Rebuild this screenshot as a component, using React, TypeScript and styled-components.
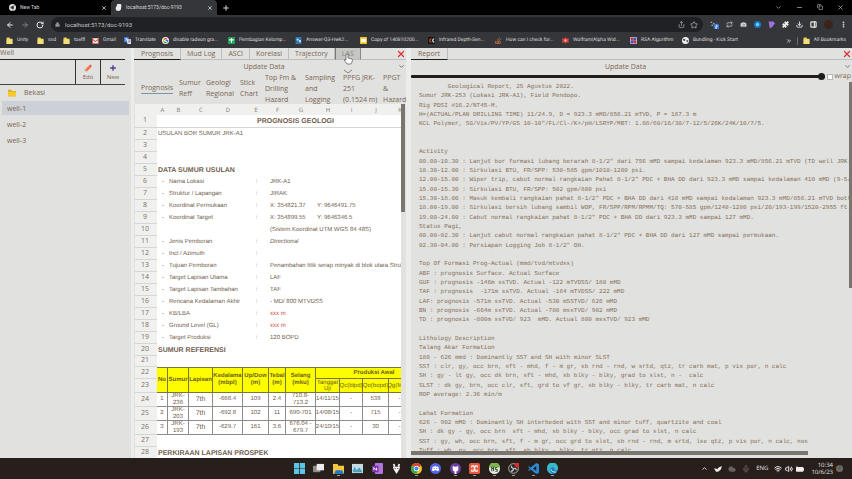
import React from "react";
import styled, { createGlobalStyle, css } from "styled-components";
import {
  ArrowLeft, ArrowRight, RotateCw, Lock, Share, Star, Puzzle, Download, PanelRight, EllipsisVertical,
  ChevronDown, ChevronUp, ChevronsRight, Minus, Copy, X, Plus, Camera, Wifi, Volume2, Cloud, Mic, Repeat,
} from "lucide-react";

const ui = '"Open Sans", "Noto Sans", sans-serif';
const chrome = 'Roboto, "Open Sans", sans-serif';
const sheetFont = '"Liberation Sans", Arial, sans-serif';
const mono = '"Liberation Mono", monospace';

const ink = "#7a6653";
const paper = "#e1e1df";
const gutter = "#ececeb";
const line = "#bdbdbb";

const Global = createGlobalStyle`
  * { box-sizing: border-box; }
  body { margin: 0; background: ${paper}; text-rendering: geometricPrecision; }
  button { background: none; border: 0; padding: 0; margin: 0; color: inherit; font: inherit; }
  svg { display: block; flex: none; }
`;

const Page = styled.div`
  display: flex; flex-direction: column; height: 100vh; overflow: hidden;
  font-family: ${ui}; font-size: 7px; line-height: 11px; color: ${ink};
`;

/* ---------- browser ---------- */
const TitleBar = styled.header`
  display: flex; align-items: center; height: 15px; flex: none; background: #000;
  color: #d8d8d8; font-family: ${chrome}; font-size: 5px;
`;
const BrowserTab = styled.button<{ $active?: boolean }>`
  display: flex; align-items: center; gap: 4px; height: 15px; width: ${p => (p.$active ? 106 : 111)}px;
  padding: 0 4px 0 ${p => (p.$active ? 4 : 9)}px; border-radius: 4px 4px 0 0;
  ${p => p.$active && css`background: #35363a;`}
  span { flex: 1; text-align: left; }
`;
const WindowButtons = styled.div`
  display: flex; gap: 14px; margin-left: auto; padding-right: 8px;
`;
const NewTabButton = styled.button` padding-left: 5px; `;
const AddressRow = styled.div`
  display: flex; align-items: center; height: 18px; flex: none; padding: 1px 5px 0 6px; gap: 7px;
  background: #35363a; color: #e8e8e8;
`;
const AddressBox = styled.div`
  display: flex; align-items: center; gap: 5px; flex: 1; height: 15px; padding: 0 5px 0 4px;
  border-radius: 8px; background: #202124; color: #c8c8c8;
`;
const AddressInput = styled.input`
  flex: 1; min-width: 0; border: 0; outline: 0; padding: 0; background: none;
  color: #c4c6ca; font: 6px ${chrome};
`;
const Bookmarks = styled.nav`
  display: flex; align-items: center; height: 15px; flex: none; padding: 0 6px; background: #35363a;
  font-family: ${chrome}; font-size: 5px;
`;
const Bookmark = styled.a<{ $w?: number }>`
  display: flex; align-items: center; gap: 4px; flex: 0 0 ${p => (p.$w ? p.$w + "px" : "auto")};
  color: #dcdcdc; text-decoration: none; white-space: nowrap;
`;
const BookmarkEnd = styled.div`
  display: flex; align-items: center; gap: 5px; margin-left: auto; color: #dcdcdc;
`;
const Separator = styled.span` width: 1px; height: 8px; background: #6a6a6a; `;

/* ---------- workspace ---------- */
const Workspace = styled.main`
  display: grid; grid-template-columns: 131fr 275fr 446fr;
  flex: 1; min-height: 0;
`;
const Panel = styled.section<{ $gutter?: number }>`
  display: flex; flex-direction: column; min-width: 0; min-height: 0; background: ${paper};
  border-left: ${p => p.$gutter ?? 0}px solid ${gutter};
`;
const SideTitle = styled.h1`
  margin: 0 6px 0 0; height: 12px; font-size: 7px; line-height: 11px; font-weight: 400; border-bottom: 1px solid #222;
`;
const SideActions = styled.div`
  display: flex; justify-content: flex-end; height: 25px; margin-right: 6px; border-bottom: 1px solid #444;
`;
const SideAction = styled.button`
  display: flex; flex-direction: column; align-items: center; justify-content: center; gap: 1px;
  width: 25px; border-left: 1px solid #333; font-size: 6px; line-height: 8px;
`;
const FolderRow = styled.button`
  display: flex; align-items: center; gap: 8px; height: 15px; padding-left: 8px;
`;
const WellList = styled.ul`
  list-style: none; display: flex; flex-direction: column; gap: 2px; margin: 1px 2px 0; padding: 0;
`;
const WellItem = styled.button<{ $selected?: boolean }>`
  width: 100%; height: 14px; padding-left: 5px; text-align: left;
  background: ${p => (p.$selected ? "#cdd0d6" : "transparent")};
`;

const TabStrip = styled.div`
  display: flex; height: 12px; flex: none; border-bottom: 1px solid ${line};
`;
const DocTab = styled.button<{ $active?: boolean; $hover?: boolean }>`
  height: 12px; padding: 0 ${p => (p.$active ? 7 : 6)}px; border-right: 1px solid ${line};
  border-bottom: 1px solid ${p => (p.$active ? "#1c1c1c" : line)};
  ${p => p.$hover && css`background: #c6c6c5; border-left: 1px solid #777; border-right-color: #888; color: #8e8378;`}
`;
const CloseTab = styled.button`
  margin-left: auto; color: #d8343a;
`;
const UpdateBar = styled.button`
  display: grid; grid-template-columns: 8px 1fr 8px; align-items: center; height: 12px; flex: none;
  span { grid-column: 2; padding-right: 12px; text-align: center; }
`;
const SubTabs = styled.div`
  display: flex; align-items: center; height: 32px; flex: none; padding-left: 7px; overflow: hidden;
`;
const SubTab = styled.button<{ $w: number; $active?: boolean }>`
  flex: 0 0 ${p => p.$w}px; text-align: left; white-space: nowrap;
  span { display: inline-block; ${p => p.$active && css`border-bottom: 1px solid #7d93a8;`} }
`;

/* ---------- sheet ---------- */
const SheetArea = styled.div` display: flex; flex: 1; min-height: 0; `;
const SheetClip = styled.div`
  flex: 1; min-width: 0; overflow: hidden; margin-left: 1px; background: #fff;
`;
const ScrollThumb = styled.div`
  width: 4px; height: 108px; margin-right: 1px; background: #7b7570;
`;
const Sheet = styled.table`
  table-layout: fixed; border-collapse: separate; border-spacing: 0; width: 298px;
  font-family: ${sheetFont}; font-size: 6px; line-height: 7px; color: #6f5d4d; font-weight: 400;
`;
const Row = styled.tr<{ $h: number }>` height: ${p => p.$h}px; `;
const ColHead = styled.th`
  padding: 0; background: #f0f0ef; color: #857b70; font: 6px/10px ${ui};
`;
const RowHead = styled.th`
  padding: 0 2px 0 0; background: #f0f0ef; border-bottom: 1px solid #d6d6d4;
  color: #7d7268; font: 7px/10px ${ui};
`;
const Cell = styled.td<{ $bold?: boolean; $center?: boolean; $red?: boolean; $italic?: boolean; $rule?: boolean }>`
  padding: 0 0 0 1px; white-space: nowrap; overflow: visible;
  ${p => p.$bold && css`font-weight: 700; font-size: 7px;`}
  ${p => p.$center && css`text-align: center;`}
  ${p => p.$red && css`color: #d04a3c;`}
  ${p => p.$italic && css`font-style: italic;`}
  ${p => p.$rule && css`border-bottom: 1px solid #d6d6d4;`}
`;
const HeadCell = styled.th<{ $plain?: boolean; $top?: boolean }>`
  padding: 0; overflow: hidden; background: #fdfd00; color: #6e5f1c;
  border-right: 1px solid #77773a; border-bottom: 1px solid #77773a;
  ${p => p.$top && css`border-top: 1px solid #77773a;`}
  font-weight: ${p => (p.$plain ? 400 : 700)}; line-height: ${p => (p.$plain ? 6 : 7)}px;
`;
const DataCell = styled.td`
  padding: 0; overflow: hidden; text-align: center; white-space: nowrap;
  border-right: 1px solid #8c8c8a; border-bottom: 1px solid #8c8c8a;
`;
const CellClip = styled.div<{ $large?: boolean }>`
  display: flex; align-items: center; justify-content: center; max-height: 13px; overflow: hidden;
  ${p => p.$large && css`font-size: 7px;`}
`;

/* ---------- report ---------- */
const WrapBar = styled.div`
  display: flex; align-items: center; height: 9px; flex: none; padding-right: 1px;
`;
const Range = styled.input`
  appearance: none; flex: 1; height: 3px; margin: 0 2px 0 0; background: #1f1c1b; border-radius: 1px;
  &::-webkit-slider-thumb { appearance: none; width: 7px; height: 7px; border-radius: 50%; background: #1f1c1b; }
`;
const WrapLabel = styled.label`
  display: flex; align-items: center; gap: 2px; line-height: 9px;
`;
const Check = styled.input`
  appearance: none; width: 6px; height: 6px; margin: 0; background: #fff; border: 1px solid #b5b5b3;
`;
const ReportArea = styled.div`
  display: flex; flex: 1; min-height: 0; padding-top: 1px;
`;
const ReportText = styled.div`
  display: grid; grid-auto-rows: minmax(9px, 1fr); align-items: center; flex: 1; min-width: 0; overflow: hidden;
  padding-left: 8px; font: 6px/9px ${mono}; white-space: pre; color: #857058;
`;
const SideThumb = styled.div` width: 3px; height: 206px; background: #7b7570; `;
const BottomTrack = styled.div` height: 7px; flex: none; margin-top: -4px; `;
const BottomThumb = styled.div` width: 90%; height: 4px; background: #7b7570; `;

/* ---------- taskbar ---------- */
const Taskbar = styled.footer`
  display: grid; grid-template-columns: 1fr 31% 1fr; align-items: center; height: 21px; flex: none;
  background: #271f1b; color: #e6e4e2; font-family: ${ui};
`;
const Apps = styled.div` display: flex; justify-content: space-between; grid-column: 2; `;
const AppButton = styled.button<{ $running?: boolean }>`
  display: flex; flex-direction: column; align-items: center; gap: 1px; padding-top: 2px;
  &::after { content: ""; width: 3px; height: 1px; background: ${p => (p.$running ? "#a09a96" : "transparent")}; }
`;
const Tray = styled.div`
  display: flex; align-items: center; justify-content: flex-end; gap: 6px; padding-right: 9px;
  font-size: 6px; line-height: 7px;
`;
const TrayGroup = styled.div` display: flex; align-items: center; gap: 3px; padding-right: 1px; `;
const Clock = styled.time` text-align: right; `;
const Bell = styled.span`
  width: 7px; height: 7px; margin-left: -3px; border-radius: 50%; background: #6f6965; color: #2b2421;
  font-size: 5px; line-height: 7px; text-align: center;
`;

const Pointer = styled.svg` position: fixed; left: 343px; top: 53px; `;

/* ---------- drawings ---------- */
type IconName = string;
const art: Record<IconName, React.ReactNode> = {
  folder: <><path d="M1 1h5l1 2h4v9H1z" fill="#e9ce5c" /><path d="M1 4h10v8H1z" fill="#f3e07a" /></>,
  gmail: <><rect y="2" width="12" height="9" rx="1" fill="#f4f0ee" /><path d="M0 2l6 5 6-5v2L6 9 0 4z" fill="#d34a3c" /><path d="M0 3h2v8H0zM10 3h2v8h-2z" fill="#d34a3c" /></>,
  translate: <><rect width="8" height="9" rx="1" fill="#3d7de0" /><path d="M4 4h8v8H6z" fill="#dfe4ea" /><path d="M2 3h4M4 2v1M3 6l2-3" stroke="#fff" fill="none" /><path d="M7 7h4M9 6v1M8 10l2-3" stroke="#657" fill="none" /></>,
  google: <><circle cx="6" cy="6" r="6" fill="#f5f5f5" /><path d="M9 4a4 4 0 0 0-6 0" stroke="#e34133" strokeWidth="2" fill="none" /><path d="M3 4a4 4 0 0 0 0 4" stroke="#f3b605" strokeWidth="2" fill="none" /><path d="M3 8a4 4 0 0 0 5 1" stroke="#32a350" strokeWidth="2" fill="none" /><path d="M6 6h4a4 4 0 0 1-2 3" stroke="#3f7ce8" strokeWidth="2" fill="none" /></>,
  sheets: <><rect width="12" height="12" rx="1" fill="#20a05a" /><path d="M6 2v8M2 5h8" stroke="#fff" strokeWidth="2" /></>,
  answer: <><rect x="1" width="10" height="12" fill="#2f78b5" /><path d="M3 3h3v3H3zM7 5h3v4H7zM3 8h3" fill="#d6ecf8" /></>,
  slides: <><rect width="12" height="12" rx="1" fill="#f2bf27" /><rect x="2" y="3" width="8" height="6" fill="#fff" /></>,
  infrared: <><rect width="12" height="12" fill="#181313" /><path d="M6 3a3 3 0 1 0 0 6" stroke="#d4543a" strokeWidth="2" fill="none" /><path d="M11 3a3 3 0 1 0 0 6" stroke="#eee" strokeWidth="2" fill="none" /></>,
  stack: <path d="M1 7v4h8V7M3 9h4M3 7l4 1M4 4l4 2M7 1l3 4" stroke="#d0763c" strokeWidth="1.4" fill="none" />,
  wolfram: <><path d="M6 0l2 3 4-1-1 4 1 4-4-1-2 3-2-3-4 1 1-4-1-4 4 1z" fill="#e0423a" /><circle cx="6" cy="6" r="2" fill="#f7b0a4" /></>,
  rsa: <><rect width="12" height="12" rx="2" fill="#e9e6f2" /><path d="M1 1h5v5H1zM6 6h5v5H6z" fill="#c9313e" /><path d="M6 1h5v5H6zM1 6h5v5H1z" fill="#4350b4" /></>,
  globe: <><circle cx="6" cy="6" r="6" fill="#eee" /><path d="M2 3l4 1-1 3-3-1zM7 6l4-1-2 5z" fill="#444" /></>,
  tabGlobe: <><circle cx="6" cy="6" r="6" fill="#e6e6e6" /><circle cx="6" cy="6" r="2.5" fill="#333" /><path d="M6 3h5M4 8L1 4M8 7l-2 5" stroke="#444" /></>,
  page: <path d="M4 0h6l1 3-1 7-3 2-5-1-1-4 2-4z" fill="#ececec" />,
  pencil: <><path d="M1 11l1-3 6-6 3 3-6 6z" fill="#ef7a4b" /><path d="M8 2l1-1h2v3l-1 1z" fill="#e04858" /><path d="M1 11l1-3 2 2z" fill="#d9a58c" /></>,
  folderSolid: <><path d="M0 1h5l1 2h6v8H0z" fill="#e2a91a" /><path d="M0 4h12v7H0z" fill="#f4c92e" /></>,
  windows: <path d="M0 0h5.6v5.6H0zM6.4 0H12v5.6H6.4zM0 6.4h5.6V12H0zM6.4 6.4H12V12H6.4z" fill="#5cc4e6" />,
  taskview: <><rect y="3" width="8" height="7" fill="#8d8a88" /><rect x="4" y="1" width="8" height="7" fill="#eeeceb" /></>,
  explorer: <><path d="M0 1h5l1 2h6v9H0z" fill="#f2c744" /><path d="M3 8h7l2 4H1z" fill="#2876c8" /></>,
  monitor: <><rect y="1" width="12" height="10" fill="#c5dbe2" /><path d="M1 8l2-4 2 4 3-3 3 4v1H1z" fill="#49a2bd" /></>,
  onenote: <><rect x="3" width="9" height="12" rx="1" fill="#b273dc" /><rect y="3" width="7" height="7" fill="#7431a6" /><path d="M2 8V5l3 3V5" stroke="#fff" fill="none" /></>,
  foobar: <><path d="M3 1l1 3M9 1L8 4" stroke="#eee" strokeWidth="2" /><path d="M2 4h8l-1 3-3 5-3-5z" fill="#f3f3f3" /><path d="M4 6h1M7 6h1" stroke="#222" /></>,
  chrome: <><circle cx="6" cy="6" r="6" fill="#f3c727" /><path d="M6 6L.8 3A6 6 0 0 1 11.2 3z" fill="#df3f32" /><path d="M6 6L.8 3A6 6 0 0 0 6 12l2-5z" fill="#35a853" /><circle cx="6" cy="6" r="3" fill="#fff" /><circle cx="6" cy="6" r="2.2" fill="#4285f4" /></>,
  discord: <><circle cx="6" cy="6" r="6" fill="#5661e8" /><path d="M3 4q3-1 6 0l1 4-2 1-1-1H5L4 9 2 8z" fill="#fff" /><path d="M4 6h1M7 6h1" stroke="#5661e8" /></>,
  github: <><circle cx="6" cy="6" r="6" fill="#6d3fa5" /><path d="M3 3l2 1h2l2-1v4q0 2-2 2v3H5V9Q3 9 3 7z" fill="#fff" /></>,
  xampp: <><rect width="12" height="12" rx="2" fill="#e9573d" /><path d="M3 3h2l2 6h2V7M9 3H7L5 9H3V7M3 3v2M9 3v2" stroke="#fff" strokeWidth="1.3" fill="none" /></>,
  heidi: <><circle cx="6" cy="6" r="6" fill="#e8efe1" /><path d="M0 5a6 6 0 0 1 12 0z" fill="#79b84a" /><path d="M3 4v5M3 6h2M5 4v5M9 5H7v2h2v2H7" stroke="#333" fill="none" /></>,
  obs: <><circle cx="6" cy="6" r="5.3" fill="#292727" stroke="#bbb" strokeWidth="1" /><path d="M6 6q-3-1-2-3M6 6q3-1 3 2M6 6q0 3-3 3" stroke="#ccc" strokeWidth="1.3" fill="none" /><circle cx="10" cy="2" r="2.8" fill="#e3292b" /></>,
  vscode: <><path d="M9 0l3 1.4v9.2L9 12 3 7 1 8.5 0 8l2-2-2-2 1-.5L3 5z" fill="#2a8ad8" /><path d="M9 3.3v5.4L5.5 6z" fill="#271f1b" /></>,
  edge: <><circle cx="6" cy="6" r="6" fill="#1c78c8" /><path d="M0 5a6 6 0 0 1 12 1c0 2-3 3-4 2 1-2-1-4-3-3S3 9 6 12C2 12 0 9 0 5z" fill="#38b8c9" /><path d="M5 7q-1 3 5 3" stroke="#e8f6ff" fill="none" /></>,
  extA: <><path d="M1 3h2M4 5h2M2 7h2" stroke="#ccc" strokeWidth="1.5" /><rect x="5" y="5" width="7" height="7" rx="1" fill="#3273d3" /><path d="M7.500 7h2v2h-2v2h2" stroke="#fff" fill="none" /></>,
  extBlue: <><circle cx="6" cy="6" r="6" fill="#1878c8" /><circle cx="6" cy="6" r="3" fill="#6fd0f4" /></>,
  extPurple: <path d="M1 1h8l3 3-4 5-3 3H3z" fill="#a272d8" />,
  avatar: <circle cx="6" cy="6" r="6" fill="#3b241b" />,
  bird: <path d="M0 5l5 1 3-3 4-1-2 5-4 3H3z" fill="#eee" />,
  battery: <><rect y="3" width="11" height="7" rx="1" fill="#eee" /><path d="M11 5h1v3h-1zM0 1l3 3" fill="#eee" stroke="#eee" /></>,
};
const Art = ({ name, size = 6 }: { name: IconName; size?: number }) => (
  <svg width={size} height={size} viewBox="0 0 12 12" aria-hidden="true">{art[name]}</svg>
);
const Lines = ({ parts }: { parts: string[] }) => (
  <span>{parts.map((l, k) => <React.Fragment key={k}>{k > 0 && <br />}{l}</React.Fragment>)}</span>
);

/* ---------- data ---------- */
const bookmarks: [string, string, number][] = [
  ["folder", "Unity", 31], ["folder", "ssd", 26], ["folder", "toelfl", 29], ["gmail", "Gmail", 32],
  ["translate", "Translate", 38], ["google", "disable radeon gra...", 66], ["sheets", "Pembagian Kelomp...", 67],
  ["answer", "Answer-Q3-Hwk2...", 65], ["slides", "Copy of 140810200...", 68], ["infrared", "Infrared Depth-Sen...", 67],
  ["stack", "How can I check for...", 67], ["wolfram", "Wolfram|Alpha Wid...", 68], ["rsa", "RSA Algorithm", 52],
  ["globe", "Bundling - Kick Start", 60],
];
const docTabs = ["Prognosis", "Mud Log", "ASCI", "Korelasi", "Trajectory", "LAS"];
const subTabs: [string[], number][] = [
  [["Prognosis"], 38], [["Sumur", "Reff"], 27], [["Geologi", "Regional"], 34], [["Stick", "Chart"], 25],
  [["Top Fm &", "Drilling", "Hazard"], 40], [["Sampling", "and", "Logging"], 38],
  [["PPFG JRK-", "251", "(0.1524 m)"], 40], [["PPGT", "&", "Hazard"], 24],
];
const columns: [string, number][] = [
  ["A", 11], ["B", 21], ["C", 24], ["D", 30], ["E", 26], ["F", 17], ["G", 30], ["H", 24], ["I", 23], ["J", 26], ["K", 22], ["", 22],
];
const span = columns.length;
type Spec = { label: string; colon?: boolean; value?: string; second?: string; red?: boolean; italic?: boolean };
const specs: Spec[] = [
  { label: "Nama Lokasi", colon: true, value: "JRK-A1" },
  { label: "Struktur / Lapangan", colon: true, value: "JIRAK" },
  { label: "Koordinat Permukaan", colon: true, value: "X: 354821.37", second: "Y: 9646491.75" },
  { label: "Koordinat Target", colon: true, value: "X: 354899.55", second: "Y: 9646346.5" },
  { label: "", value: "(Sistem Koordinat UTM WGS 84 48S)" },
  { label: "Jenis Pemboran", colon: true, value: "Directional", italic: true },
  { label: "Incl / Azimuth", colon: true },
  { label: "Tujuan Pemboran", colon: true, value: "Penambahan titik serap minyak di blok utara Struktur" },
  { label: "Target Lapisan Utama", colon: true, value: "LAF" },
  { label: "Target Lapisan Tambahan", colon: true, value: "TAF" },
  { label: "Rencana Kedalaman Akhir", colon: true, value: "- MD/ 800 MTVDSS" },
  { label: "KB/LBA", colon: true, value: "xxx m", red: true },
  { label: "Ground Level (GL)", colon: true, value: "xxx m", red: true },
  { label: "Target Produksi", colon: true, value: "120 BOPD" },
];
const wells = [
  ["1", "JRK-\n236", "7th", "-668.4", "109", "2.4", "710.8-\n713.2", "14/11/15", "-", "538", "-", ""],
  ["2", "JRK-\n203", "7th", "-692.8", "102", "11", "690-701", "14/08/15", "-", "715", "-", ""],
  ["3", "JRK-\n193", "7th", "-629.7", "161", "3.6", "676.04 -\n679.7", "24/10/15", "-", "30", "-", ""],
];
const report = `        Geological Report, 25 Agustus 2022.
Sumur JRK-253 (Lokasi JRK-A1), Field Pendopo.
Rig PDSI #16.2/NT45-M.
H=(ACTUAL/PLAN DRILLING TIME) 11/24.9, D = 923.3 mMD/856.21 mTVD, P = 167.3 m
KCL Polymer, SG/Vis/PV/YP/GS 10-10"/FL/Cl-/K+/pH/LSRYP/MBT: 1.08/60/16/30/7-12/5/26K/24K/10/7/5.


Activity
00.00-10.30 : Lanjut bor formasi lubang berarah 8-1/2" dari 756 mMD sampai kedalaman 923.3 mMD/856.21 mTVD (TD well JRK-253)
10.30-12.00 : Sirkulasi BTU, FR/SPP: 530-585 gpm/1010-1200 psi.
12.00-15.00 : Wiper trip, cabut normal rangkaian Pahat 8-1/2" PDC + BHA DD dari 923.3 mMD sampai kedalaman 410 mMD (9-5/8" inside casing)
15.00-15.30 : Sirkulasi BTU, FR/SPP: 502 gpm/800 psi
15.30-18.00 : Masuk kembali rangkaian pahat 8-1/2" PDC + BHA DD dari 410 mMD sampai kedalaman 923.3 mMD/856.21 mTVD bottom (no fill)
18.00-19.00 : Sirkulasi bersih lubang sambil WOP, FR/SPP/RPM/RPMM/TQ: 570-585 gpm/1240-1280 psi/20/193-199/1520-2955 ft.lbs
19.00-24.00 : Cabut normal rangkaian pahat 8-1/2" PDC + BHA DD dari 923.3 mMD sampai 127 mMD.
Status Pagi,
00.00-02.30 : Lanjut cabut normal rangkaian pahat 8-1/2" PDC + BHA DD dari 127 mMD sampai permukaan.
02.30-04.00 : Persiapan Logging Job 8-1/2" OH.

Top Of Formasi Prog-Actual (mmd/tvd/mtvdss)
ABF : prognosis Surface. Actual Surface
GUF : prognosis -146m ssTVD. Actual -122 mTVDSS/ 180 mMD
TAF : prognosis  -171m ssTVD. Actual -164 mTVDSS/ 222 mMD
LAF: prognosis -571m ssTVD. Actual -530 mSSTVD/ 626 mMD
BN : prognosis -664m ssTVD. Actual -780 mssTVD/ 902 mMD
TD : prognosis -800m ssTVD/ 923  mMD. Actual 800 mssTVD/ 923 mMD

Lithology Description
Talang Akar Formation
180 - 626 mmd : Dominantly SST and SH with minor SLST
SST : clr, gy, occ brn, sft - mhd, f - m gr, sb rnd - rnd, w srtd, qtz, tr carb mat, p vis por, n calc
SH : gy - lt gy, occ dk brn, sft - mhd, sb blky - blky, grad to slst, n -  calc
SLST : dk gy, brn, occ clr, sft, grd to vf gr, sb blky - blky, tr carb mat, n calc
ROP average: 2.36 min/m

Lahat Formation
626 - 902 mMD : Dominantly SH interbeded with SST and minor tuff, quartzite and coal
SH : dk gy - gy, occ brn  sft - mhd, sb blky - blky, occ grad to slst, n calc
SST : gy, wh, occ brn, sft, f - m gr, occ grd to slst, sb rnd - rnd, m srtd, lse qtz, p vis por, n calc, nos
Tuff : wh, gy, occ brn, sft, sb blky - blky, tr qtz, n calc`.split("\n");
const apps: [string, string, boolean][] = [
  ["windows", "Start", false], ["taskview", "Task view", false], ["explorer", "Explorer", true], ["monitor", "Monitor", false],
  ["onenote", "OneNote", false], ["foobar", "Player", false], ["chrome", "Chrome", true], ["discord", "Discord", false],
  ["github", "GitHub", true], ["xampp", "XAMPP", true], ["heidi", "HeidiSQL", true], ["obs", "OBS", true],
  ["vscode", "VS Code", true], ["edge", "Edge", true],
];

const SheetTable = () => (
  <Sheet>
    <colgroup>
      <col width={22} />
      {columns.map(([c, w]) => <col key={c} width={w} />)}
    </colgroup>
    <thead>
      <Row $h={11}>
        <ColHead />
        {columns.map(([c]) => <ColHead key={c} scope="col">{c}</ColHead>)}
      </Row>
    </thead>
    <tbody>
      <Row $h={13}><RowHead>1</RowHead><Cell colSpan={span} $bold $center $rule>PROGNOSIS GEOLOGI</Cell></Row>
      <Row $h={12}><RowHead>2</RowHead><Cell colSpan={span}>USULAN BOR SUMUR JRK-A1</Cell></Row>
      <Row $h={12}><RowHead>3</RowHead><Cell colSpan={span} /></Row>
      <Row $h={12}><RowHead>4</RowHead><Cell colSpan={span} /></Row>
      <Row $h={12}><RowHead>5</RowHead><Cell colSpan={span} $bold>DATA SUMUR USULAN</Cell></Row>
      {specs.map((s, i) => (
        <Row $h={12} key={i}>
          <RowHead>{i + 6}</RowHead>
          <Cell $center>{s.label && "-"}</Cell>
          <Cell colSpan={3}>{s.label}</Cell>
          <Cell $center>{s.colon && ":"}</Cell>
          <Cell colSpan={2} $red={s.red} $italic={s.italic}>{s.value}</Cell>
          <Cell colSpan={5}>{s.second}</Cell>
        </Row>
      ))}
      <Row $h={12}><RowHead>20</RowHead><Cell colSpan={span} $bold>SUMUR REFERENSI</Cell></Row>
      <Row $h={11}><RowHead>21</RowHead><Cell colSpan={span} /></Row>
      <Row $h={12}>
        <RowHead>22</RowHead>
        {["No", "Sumur", "Lapisan", "Kedalama (mbpl)", "Up/Dow (m)", "Tebal (m)", "Selang (mku)"].map(h => (
          <HeadCell rowSpan={2} $top key={h}>{h}</HeadCell>
        ))}
        <HeadCell colSpan={5} $top>Produksi Awal</HeadCell>
      </Row>
      <Row $h={14}>
        <RowHead>23</RowHead>
        {["Tanggal Uji", "Qc(blpd)", "Qo(bopd)", "Qg(Mscf)", ""].map(h => (
          <HeadCell $plain key={h}><CellClip>{h}</CellClip></HeadCell>
        ))}
      </Row>
      {wells.map((w, r) => (
        <Row $h={14} key={r}>
          <RowHead>{r + 24}</RowHead>
          {w.map((v, c) => (
            <DataCell key={c}><CellClip $large={c === 2}><Lines parts={v.split("\n")} /></CellClip></DataCell>
          ))}
        </Row>
      ))}
      <Row $h={12}><RowHead>27</RowHead><Cell colSpan={span} /></Row>
      <Row $h={12}><RowHead>28</RowHead><Cell colSpan={span} $bold>PERKIRAAN LAPISAN PROSPEK</Cell></Row>
    </tbody>
  </Sheet>
);

export default function App() {
  return (
    <Page>
      <Global />
      <TitleBar>
        <BrowserTab><Art name="tabGlobe" size={7} /><span>New Tab</span><X size={6} strokeWidth={3} /></BrowserTab>
        <BrowserTab $active><Art name="page" size={7} /><span>localhost:5173/doc-9193</span><X size={6} strokeWidth={3} /></BrowserTab>
        <NewTabButton aria-label="New tab"><Plus size={8} strokeWidth={3} /></NewTabButton>
        <WindowButtons>
          <ChevronDown size={7} /><Minus size={7} /><Copy size={6} /><X size={7} />
        </WindowButtons>
      </TitleBar>
      <AddressRow>
        <ArrowLeft size={8} strokeWidth={3} />
        <ArrowRight size={8} strokeWidth={2} color="#a0a0a0" />
        <RotateCw size={8} strokeWidth={3} />
        <AddressBox>
          <Lock size={5} fill="#999" color="#999" />
          <AddressInput aria-label="Address" defaultValue="localhost:5173/doc-9193" />
          <Share size={7} /><Star size={8} />
        </AddressBox>
        <Art name="extA" size={9} /><Repeat size={7} /><Camera size={7} fill="#ddd" color="#777" /><Art name="extBlue" size={7} />
        <Art name="extPurple" size={7} /><Puzzle size={7} fill="#eee" /><Download size={7} strokeWidth={3} /><PanelRight size={7} strokeWidth={4} />
        <Art name="avatar" size={9} /><EllipsisVertical size={7} strokeWidth={4} />
      </AddressRow>
      <Bookmarks>
        {bookmarks.map(([icon, label, w]) => (
          <Bookmark href="#" key={label} $w={w}><Art name={icon} size={7} />{label}</Bookmark>
        ))}
        <BookmarkEnd>
          <ChevronsRight size={6} strokeWidth={3} /><Separator />
          <Bookmark href="#"><Art name="folder" size={7} />All Bookmarks</Bookmark>
        </BookmarkEnd>
      </Bookmarks>

      <Workspace>
        <Panel>
          <SideTitle>Well</SideTitle>
          <SideActions>
            <SideAction><Art name="pencil" size={8} />Edit</SideAction>
            <SideAction><Plus size={8} strokeWidth={4} color="#4c3a8c" />New</SideAction>
          </SideActions>
          <FolderRow><Art name="folderSolid" size={8} />Bekasi</FolderRow>
          <WellList>
            {["well-1", "well-2", "well-3"].map((w, i) => <li key={w}><WellItem $selected={i === 0}>{w}</WellItem></li>)}
          </WellList>
        </Panel>

        <Panel $gutter={3}>
          <TabStrip>
            {docTabs.map((t, i) => <DocTab key={t} $active={i === 0} $hover={i === 5}>{t}</DocTab>)}
            <CloseTab aria-label="Close"><X size={10} strokeWidth={3} /></CloseTab>
          </TabStrip>
          <UpdateBar><span>Update Data</span><ChevronDown size={7} strokeWidth={3} /></UpdateBar>
          <SubTabs>
            {subTabs.map(([lines, w], i) => (
              <SubTab key={i} $w={w} $active={i === 0}><Lines parts={lines} /></SubTab>
            ))}
          </SubTabs>
          <SheetArea>
            <SheetClip><SheetTable /></SheetClip>
            <ScrollThumb />
          </SheetArea>
        </Panel>

        <Panel $gutter={5}>
          <TabStrip>
            <DocTab $active>Report</DocTab>
            <CloseTab aria-label="Close"><X size={10} strokeWidth={3} /></CloseTab>
          </TabStrip>
          <UpdateBar><span>Update Data</span><ChevronDown size={7} strokeWidth={3} /></UpdateBar>
          <WrapBar>
            <Range type="range" aria-label="Text width" defaultValue={100} />
            <WrapLabel><Check type="checkbox" />wrap</WrapLabel>
          </WrapBar>
          <ReportArea>
            <ReportText>{report.map((l, i) => <span key={i}>{l}</span>)}</ReportText>
            <SideThumb />
          </ReportArea>
          <BottomTrack><BottomThumb /></BottomTrack>
        </Panel>
      </Workspace>

      <Taskbar>
        <Apps>
          {apps.map(([icon, label, running]) => (
            <AppButton key={icon} aria-label={label} $running={running}><Art name={icon} size={11} /></AppButton>
          ))}
        </Apps>
        <Tray>
          <ChevronUp size={7} strokeWidth={3} /><Art name="bird" size={8} />
          <Cloud size={8} fill="#6a6460" color="#6a6460" /><Mic size={8} color="#77706c" />
          <span>ENG</span>
          <TrayGroup><Wifi size={8} strokeWidth={3} /><Volume2 size={8} strokeWidth={3} /><Art name="battery" size={8} /></TrayGroup>
          <Clock>10:34<br />10/6/23</Clock>
          <Bell>2</Bell>
        </Tray>
      </Taskbar>
      <Pointer width="12" height="22" viewBox="0 0 12 22" aria-hidden="true">
        <path d="M3 1.500q1-1 2 0V5l4 1q1 1 0 3L8 11H4L1 7q0-1 2 0z" fill="#fff" stroke="#555" strokeWidth="0.700" />
        <path d="M1 17l4 3 4-3" fill="none" stroke="#8a8078" />
      </Pointer>
    </Page>
  );
}
